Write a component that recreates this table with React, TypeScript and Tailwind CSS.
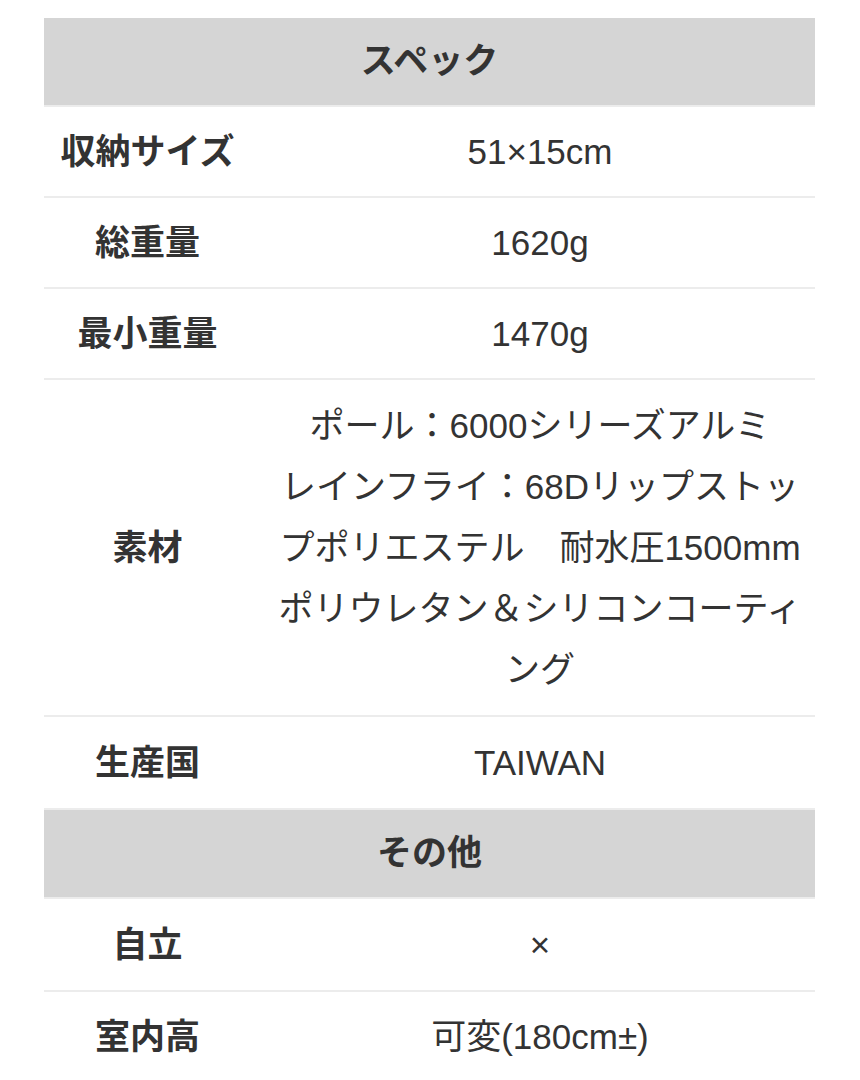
import React from "react";

type Row = { label: string; value: React.ReactNode; tall?: boolean };

const specRows: Row[] = [
  { label: "収納サイズ", value: "51×15cm" },
  { label: "総重量", value: "1620g" },
  { label: "最小重量", value: "1470g" },
  {
    label: "素材",
    tall: true,
    value: (
      <>
        ポール：6000シリーズアルミ
        <br />
        レインフライ：68Dリップストッ
        <br />
        プポリエステル　耐水圧1500mm
        <br />
        ポリウレタン＆シリコンコーティ
        <br />
        ング
      </>
    ),
  },
  { label: "生産国", value: "TAIWAN", tall: true },
];

const otherRows: Row[] = [
  { label: "自立", value: "×", tall: true },
  { label: "室内高", value: "可変(180cm±)" },
];

function Header({ title }: { title: string }) {
  return (
    <div className="bg-[#d5d5d5] h-[89px] flex items-center justify-center text-[35px] font-bold text-[#333] border-b-2 border-[#ececec]">
      {title}
    </div>
  );
}

function DataRow({ row }: { row: Row }) {
  const pad = row.tall ? "py-[15px]" : "py-[14px]";
  return (
    <div className="grid grid-cols-[207px_1fr] items-center border-b-2 border-[#ececec]">
      <div className={`text-center font-bold text-[35px] leading-[61px] text-[#333] ${pad}`}>
        {row.label}
      </div>
      <div className={`text-center text-[35px] leading-[61px] text-[#333] pl-[14px] ${pad}`}>
        {row.value}
      </div>
    </div>
  );
}

export default function App() {
  return (
    <div
      className="bg-white w-[860px] min-h-[1080px] pt-[18px] px-[44px] overflow-hidden"
      style={{ fontFamily: '"Liberation Sans", "Noto Sans CJK JP", sans-serif' }}
    >
      <div className="w-[771px]">
        <Header title="スペック" />
        {specRows.map((r, i) => (
          <DataRow key={i} row={r} />
        ))}
        <Header title="その他" />
        {otherRows.map((r, i) => (
          <DataRow key={i} row={r} />
        ))}
      </div>
    </div>
  );
}
